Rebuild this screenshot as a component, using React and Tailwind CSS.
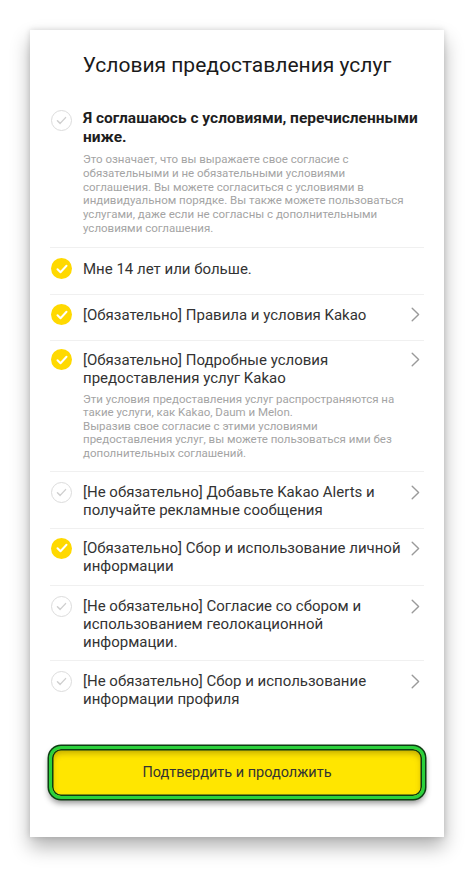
import React from 'react';

const items = [
  { checked: true, lines: ['Мне 14 лет или больше.'], pt: 'pt-[12px]', pb: 'pb-[16px]' },
  { checked: true, arrow: true, lines: ['[Обязательно] Правила и условия Kakao'], pt: 'pt-[11px]', pb: 'pb-[16px]' },
  {
    checked: true,
    arrow: true,
    lines: ['[Обязательно] Подробные условия', 'предоставления услуг Kakao'],
    desc: [
      'Эти условия предоставления услуг распространяются на',
      'такие услуги, как Kakao, Daum и Melon.',
      'Выразив свое согласие с этими условиями',
      'предоставления услуг, вы можете пользоваться ими без',
      'дополнительных соглашений.',
    ],
    pt: 'pt-[10px]',
    pb: 'pb-[11px]',
  },
  { arrow: true, lines: ['[Не обязательно] Добавьте Kakao Alerts и', 'получайте рекламные сообщения'], pt: 'pt-[11px]', pb: 'pb-[9px]' },
  { checked: true, arrow: true, lines: ['[Обязательно] Сбор и использование личной', 'информации'], pt: 'pt-[10px]', pb: 'pb-[10px]' },
  {
    arrow: true,
    lines: ['[Не обязательно] Согласие со сбором и', 'использованием геолокационной', 'информации.'],
    pt: 'pt-[11px]',
    pb: 'pb-[9px]',
  },
  { arrow: true, lines: ['[Не обязательно] Сбор и использование', 'информации профиля'], pt: 'pt-[11px]', pb: 'pb-0', last: true },
];

const CheckCircle = ({ checked }) =>
  checked ? (
    <div className="w-[21px] h-[21px] rounded-full bg-[#ffd900] flex items-center justify-center shrink-0">
      <svg width="12" height="10" viewBox="0 0 12 10" fill="none">
        <path d="M1.5 5.2l3 3L10.5 1.8" stroke="white" strokeWidth="2" strokeLinecap="round" strokeLinejoin="round" />
      </svg>
    </div>
  ) : (
    <div className="w-[21px] h-[21px] rounded-full border-[1.5px] border-[#dcdcdc] flex items-center justify-center shrink-0">
      <svg width="11" height="9" viewBox="0 0 12 10" fill="none">
        <path d="M1.5 5.2l3 3L10.5 1.8" stroke="#cfcfcf" strokeWidth="1.6" strokeLinecap="round" strokeLinejoin="round" />
      </svg>
    </div>
  );

const Chevron = () => (
  <svg width="9" height="15" viewBox="0 0 9 15" fill="none" className="shrink-0">
    <path d="M1.2 1.2L7.6 7.5 1.2 13.8" stroke="#9a9a9a" strokeWidth="1.4" strokeLinecap="round" strokeLinejoin="round" />
  </svg>
);

export default function App() {
  return (
    <div className="min-h-[869px] bg-white pt-[30px] px-[30px]" style={{ fontFamily: 'Roboto, "Noto Sans", sans-serif' }}>
      <div className="w-[414px] bg-white shadow-[0_10px_18px_rgba(0,0,0,0.3),0_0_6px_rgba(0,0,0,0.14)] pt-[21px] pb-[38px]">
        <h1 className="text-center text-[21px] leading-[28px] text-[#1a1a1a]">Условия предоставления услуг</h1>

        <div className="mt-[30px] px-[20px]">
          {/* all agree */}
          <div className="flex gap-[10px] pb-[11px] border-b border-[#f0f0f0]">
            <div className="pt-[1px] w-[23px] flex justify-center">
              <CheckCircle />
            </div>
            <div className="flex-1">
              <p className="text-[15.5px] leading-[19px] font-bold text-[#1e1e1e]">
                Я соглашаюсь с условиями, перечисленными
                <br />
                ниже.
              </p>
              <p className="mt-[6px] text-[11.5px] leading-[13.8px] text-[#a4a4a4]">
                Это означает, что вы выражаете свое согласие с<br />
                обязательными и не обязательными условиями<br />
                соглашения. Вы можете согласиться с условиями в<br />
                индивидуальном порядке. Вы также можете пользоваться<br />
                услугами, даже если не согласны с дополнительными<br />
                условиями соглашения.
              </p>
            </div>
          </div>

          {items.map((it, i) => (
            <div key={i} className={`flex gap-[10px] ${it.pt} ${it.pb} ${it.last ? '' : 'border-b border-[#f0f0f0]'}`}>
              <div className="w-[23px] flex justify-center h-[18px] items-center">
                <CheckCircle checked={it.checked} />
              </div>
              <div className="flex-1 min-w-0">
                <p className="text-[15px] leading-[18px] text-[#333] whitespace-nowrap">
                  {it.lines.map((l, j) => (
                    <span key={j} className="block">{l}</span>
                  ))}
                </p>
                {it.desc && (
                  <p className="mt-[6px] text-[11.5px] leading-[13.5px] text-[#a4a4a4] whitespace-nowrap">
                    {it.desc.map((l, j) => (
                      <span key={j} className="block">{l}</span>
                    ))}
                  </p>
                )}
              </div>
              {it.arrow && (
                <div className="h-[18px] flex items-center pr-[4px]">
                  <Chevron />
                </div>
              )}
            </div>
          ))}
        </div>

        <div className="mt-[38px] px-[19px]">
          <button className="w-full h-[53px] rounded-[12px] border-[3px] border-[#2bd13c] bg-[#ffe600] text-[14.5px] text-[#333] shadow-[0_0_0_1.5px_#0e3d12,inset_0_0_0_1.5px_#0e3d12,inset_0_4px_6px_rgba(110,90,0,0.45),0_4px_6px_rgba(0,0,0,0.45)]">
            Подтвердить и продолжить
          </button>
        </div>
      </div>
    </div>
  );
}
